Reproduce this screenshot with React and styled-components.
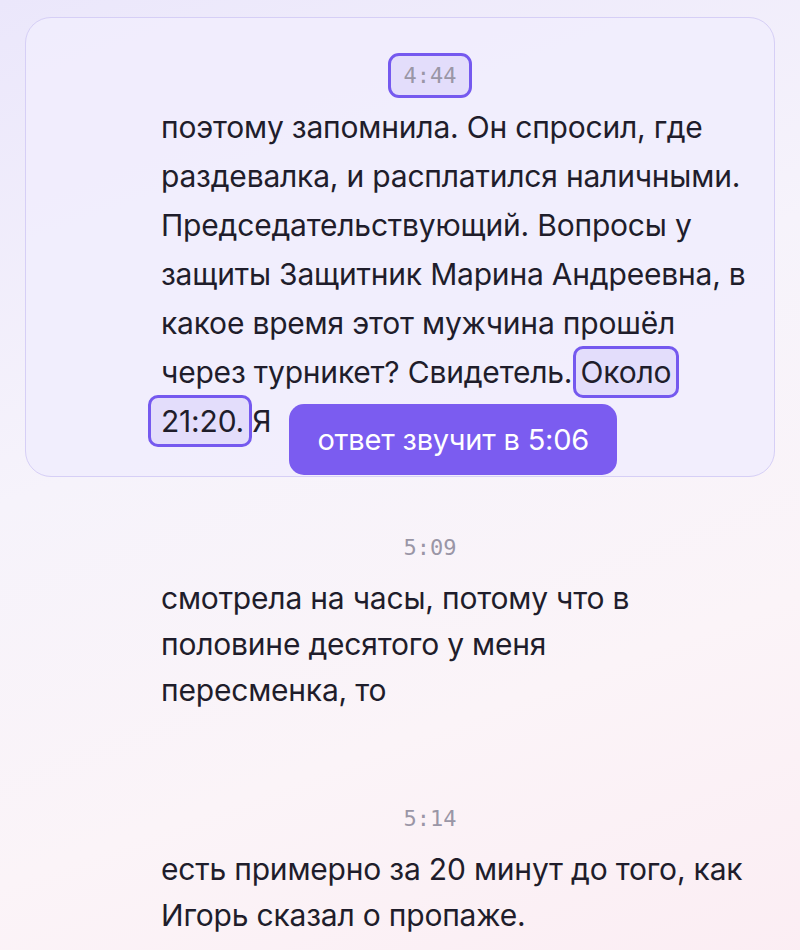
import React from "react";
import styled, { createGlobalStyle } from "styled-components";

const GlobalStyle = createGlobalStyle`
  html, body {
    margin: 0;
    padding: 0;
  }
  body {
    min-height: 950px;
    background: linear-gradient(160deg, #ebe7fb 0%, #f6f3fb 40%, #fbf4f8 70%, #fbedf3 100%);
    font-family: Inter, "Noto Sans", sans-serif;
    color: #1f1d2b;
  }
`;

const Page = styled.div`
  padding: 17px 25px 0;
  display: flex;
  flex-direction: column;
  gap: 12px;
`;

const Segment = styled.section`
  position: relative;
  padding: ${(p) => (p.$active ? "35px 15px 30px 75px" : "35px 15px 34px 75px")};
  border-radius: 26px;
  border: 1px solid ${(p) => (p.$active ? "#d6cff6" : "transparent")};
  background: ${(p) => (p.$active ? "rgba(241, 237, 253, 0.9)" : "transparent")};
`;

const Stamp = styled.div`
  display: flex;
  justify-content: center;
  margin-bottom: 5px;
`;

const StampLabel = styled.span`
  display: inline-block;
  padding: 6px 13px;
  line-height: 27px;
  font-family: "DejaVu Sans Mono", "Liberation Mono", monospace;
  font-size: 22px;
  color: #9a96a6;
  border-radius: 11px;
  border: 3px solid ${(p) => (p.$current ? "#7559ef" : "transparent")};
  background: ${(p) => (p.$current ? "#e3ddfb" : "transparent")};
`;

const Text = styled.p`
  margin: 0;
  padding-left: 60px;
  font-size: 30px;
  line-height: ${(p) => (p.$tall ? 49 : 46)}px;
  letter-spacing: -0.2px;
  white-space: nowrap;
`;

const Mark = styled.span`
  margin: 0 -8px 0 ${(p) => (p.$lead ? "-13px" : "-8px")};
  padding: 5px 5px 5px ${(p) => (p.$lead ? "10px" : "5px")};
  border: 3px solid #7559ef;
  border-radius: 10px;
  background: #e3ddfb;
`;

const JumpButton = styled.button`
  display: inline-block;
  vertical-align: top;
  height: 71px;
  margin: 7px 0 -30px 18px;
  padding: 0 28px;
  border: none;
  border-radius: 15px;
  background: #7b5cf0;
  color: #ffffff;
  font-family: Inter, "Noto Sans", sans-serif;
  font-size: 29px;
  letter-spacing: -0.2px;
  cursor: pointer;
`;

const Lines = ({ lines }) =>
  lines.map((line, i) => (
    <React.Fragment key={i}>
      {i > 0 && <br />}
      {line}
    </React.Fragment>
  ));

const segments = [
  {
    time: "5:09",
    lines: [
      "смотрела на часы, потому что в",
      "половине десятого у меня",
      "пересменка, то",
    ],
  },
  {
    time: "5:14",
    lines: ["есть примерно за 20 минут до того, как", "Игорь сказал о пропаже."],
  },
];

export default function App() {
  return (
    <>
      <GlobalStyle />
      <Page>
        <Segment $active>
          <Stamp>
            <StampLabel $current>4:44</StampLabel>
          </Stamp>
          <Text $tall>
            <Lines
              lines={[
                "поэтому запомнила. Он спросил, где",
                "раздевалка, и расплатился наличными.",
                "Председательствующий. Вопросы у",
                "защиты Защитник Марина Андреевна, в",
                "какое время этот мужчина прошёл",
              ]}
            />
            <br />
            через турникет? Свидетель. <Mark>Около</Mark>
            <br />
            <Mark $lead>21:20.</Mark> Я
            <JumpButton>ответ звучит в 5:06</JumpButton>
          </Text>
        </Segment>

        {segments.map((s) => (
          <Segment key={s.time}>
            <Stamp>
              <StampLabel>{s.time}</StampLabel>
            </Stamp>
            <Text>
              <Lines lines={s.lines} />
            </Text>
          </Segment>
        ))}
      </Page>
    </>
  );
}
